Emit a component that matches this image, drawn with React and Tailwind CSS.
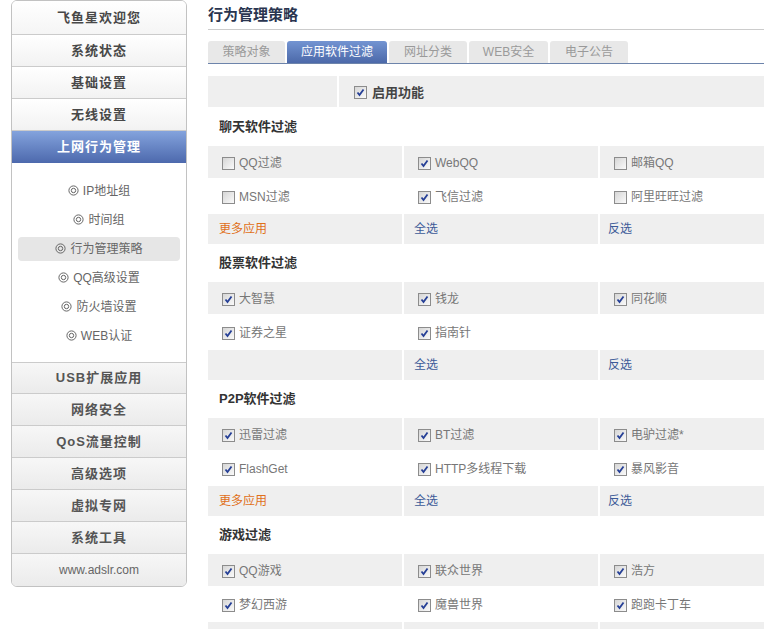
import React from 'react';

const FONT = { fontFamily: '"Liberation Sans", "Noto Sans CJK SC", sans-serif' };

function Check({ on }) {
  return (
    <span className="inline-flex w-[13px] h-[13px] shrink-0 items-center justify-center border border-[#8c8c8c] bg-gradient-to-br from-[#d6d6d6] to-[#fafafa]">
      {on && (
        <svg width="9" height="9" viewBox="0 0 9 9">
          <path d="M1.5 4.5 L3.5 7 L7.5 1.5" fill="none" stroke="#253f96" strokeWidth="1.8" />
        </svg>
      )}
    </span>
  );
}

function Ring() {
  return (
    <svg width="11" height="11" viewBox="0 0 11 11" className="shrink-0">
      <circle cx="5.5" cy="5.5" r="4.6" fill="none" stroke="#666" strokeWidth="1" />
      <circle cx="5.5" cy="5.5" r="2.2" fill="none" stroke="#666" strokeWidth="1" />
    </svg>
  );
}

function Item({ label, on }) {
  if (!label) return <div />;
  return (
    <div className="flex items-center gap-[4px] pl-[14px] pt-[2px] text-[12px] text-[#777]">
      <Check on={on} />
      <span>{label}</span>
    </div>
  );
}

const topMenu = ['系统状态', '基础设置', '无线设置'];
const subMenu = ['IP地址组', '时间组', '行为管理策略', 'QQ高级设置', '防火墙设置', 'WEB认证'];
const bottomMenu = ['网络安全', 'QoS流量控制', '高级选项', '虚拟专网', '系统工具'];
const tabs = [
  { t: '策略对象', w: 'w-[77px]' },
  { t: '应用软件过滤', w: 'w-[100px]', active: true },
  { t: '网址分类', w: 'w-[78px]' },
  { t: 'WEB安全', w: 'w-[79px]' },
  { t: '电子公告', w: 'w-[78px]' },
];

const sections = [
  {
    title: '聊天软件过滤',
    hh: 'h-[35px]',
    rows: [
      [['QQ过滤', false], ['WebQQ', true], ['邮箱QQ', false]],
      [['MSN过滤', false], ['飞信过滤', true], ['阿里旺旺过滤', false]],
    ],
    more: true,
  },
  {
    title: '股票软件过滤',
    hh: 'h-[34px]',
    rows: [
      [['大智慧', true], ['钱龙', true], ['同花顺', true]],
      [['证券之星', true], ['指南针', true], null],
    ],
    more: false,
  },
  {
    title: 'P2P软件过滤',
    hh: 'h-[34px]',
    rows: [
      [['迅雷过滤', true], ['BT过滤', true], ['电驴过滤*', true]],
      [['FlashGet', true], ['HTTP多线程下载', true], ['暴风影音', true]],
    ],
    more: true,
  },
  {
    title: '游戏过滤',
    hh: 'h-[34px]',
    rows: [
      [['QQ游戏', true], ['联众世界', true], ['浩方', true]],
      [['梦幻西游', true], ['魔兽世界', true], ['跑跑卡丁车', true]],
    ],
    more: true,
    last: true,
  },
];

export default function App() {
  return (
    <div className="w-[764px] h-[629px] overflow-hidden bg-white flex items-start" style={FONT}>
      {/* sidebar */}
      <div className="ml-[11px] w-[176px] shrink-0 border border-[#c2c2c2] rounded-[6px] overflow-hidden flex flex-col">
        <div className="h-[34px] border-b border-[#cbcbcb] bg-gradient-to-b from-white to-[#f5f5f5] flex items-center justify-center text-[13px] font-bold tracking-[1px] text-[#484848]">
          飞鱼星欢迎您
        </div>
        {topMenu.map((m) => (
          <div key={m} className="h-[32px] border-b border-[#cbcbcb] bg-gradient-to-b from-white to-[#f2f2f2] flex items-center justify-center text-[13px] font-bold tracking-[1px] text-[#484848]">
            {m}
          </div>
        ))}
        <div className="h-[32px] bg-gradient-to-b from-[#84a3dd] to-[#4d69ad] flex items-center justify-center text-[13px] font-bold tracking-[1px] text-white">
          上网行为管理
        </div>
        <div className="h-[200px] border-b border-[#cbcbcb] bg-white pt-[13px] flex flex-col">
          {subMenu.map((s) => (
            <div key={s} className="h-[29px] flex items-center">
              <div className={`mx-[6px] h-[24px] flex-1 rounded-[4px] flex items-center justify-center gap-[4px] text-[12px] text-[#666] ${s === '行为管理策略' ? 'bg-[#e6e6e6]' : ''}`}>
                <Ring />
                <span>{s}</span>
              </div>
            </div>
          ))}
        </div>
        <div className="h-[31px] border-b border-[#cbcbcb] bg-gradient-to-b from-[#f7f7f7] to-[#ebebeb] flex items-center justify-center text-[13px] font-bold tracking-[1px] text-[#555]">
          USB扩展应用
        </div>
        {bottomMenu.map((m) => (
          <div key={m} className="h-[32px] border-b border-[#cbcbcb] bg-gradient-to-b from-[#f7f7f7] to-[#ebebeb] flex items-center justify-center text-[13px] font-bold tracking-[1px] text-[#555]">
            {m}
          </div>
        ))}
        <div className="h-[32px] bg-gradient-to-b from-[#f7f7f7] to-[#ebebeb] flex items-center justify-center text-[12px] text-[#666]">
          www.adslr.com
        </div>
      </div>

      {/* main */}
      <div className="ml-[21px] flex-1 flex flex-col">
        <div className="h-[30px] shrink-0 border-b border-[#cccccc] flex items-center pt-[1px] text-[15px] font-bold text-[#2a3550]">
          行为管理策略
        </div>
        <div className="mt-[11px] shrink-0 flex items-end gap-[2px] border-b border-[#6d84ab]">
          {tabs.map((t) => (
            <div
              key={t.t}
              className={`${t.w} h-[22px] rounded-t-[3px] flex items-center justify-center text-[12px] ${
                t.active ? 'bg-gradient-to-b from-[#7394d2] to-[#4c69a9] text-white' : 'bg-[#e8e8e8] text-[#9a9a9a]'
              }`}
            >
              {t.t}
            </div>
          ))}
        </div>

        <div className="mt-[12px] shrink-0 flex flex-col gap-[2px]">
          <div className="h-[31px] shrink-0 flex gap-[2px]">
            <div className="w-[129px] bg-[#efefef]" />
            <div className="flex-1 bg-[#efefef] flex items-center gap-[5px] pl-[15px] pt-[2px] text-[13px] font-bold text-[#444]">
              <Check on />
              <span>启用功能</span>
            </div>
          </div>

          {sections.map((sec) => (
            <React.Fragment key={sec.title}>
              <div className={`${sec.hh} shrink-0 flex items-center pl-[11px] text-[13px] font-bold text-[#333]`}>{sec.title}</div>
              {sec.rows.map((r, i) => (
                <div key={i} className="h-[32px] shrink-0 grid grid-cols-[194px_194px_1fr] gap-x-[2px]">
                  {r.map((c, j) => (
                    <div key={j} className={`flex ${i === 0 ? 'bg-[#efefef]' : 'bg-white'}`}>
                      {c ? <Item label={c[0]} on={c[1]} /> : null}
                    </div>
                  ))}
                </div>
              ))}
              <div className="h-[30px] shrink-0 grid grid-cols-[194px_194px_1fr] gap-x-[2px] text-[12px]">
                <div className="bg-[#efefef] flex items-center pl-[11px] text-[#e0701a]">{sec.more && !sec.last ? '更多应用' : ''}</div>
                <div className="bg-[#efefef] flex items-center pl-[10px] text-[#3c5a98]">{sec.last ? '' : '全选'}</div>
                <div className="bg-[#efefef] flex items-center pl-[8px] text-[#3c5a98]">{sec.last ? '' : '反选'}</div>
              </div>
            </React.Fragment>
          ))}
        </div>
      </div>
    </div>
  );
}
